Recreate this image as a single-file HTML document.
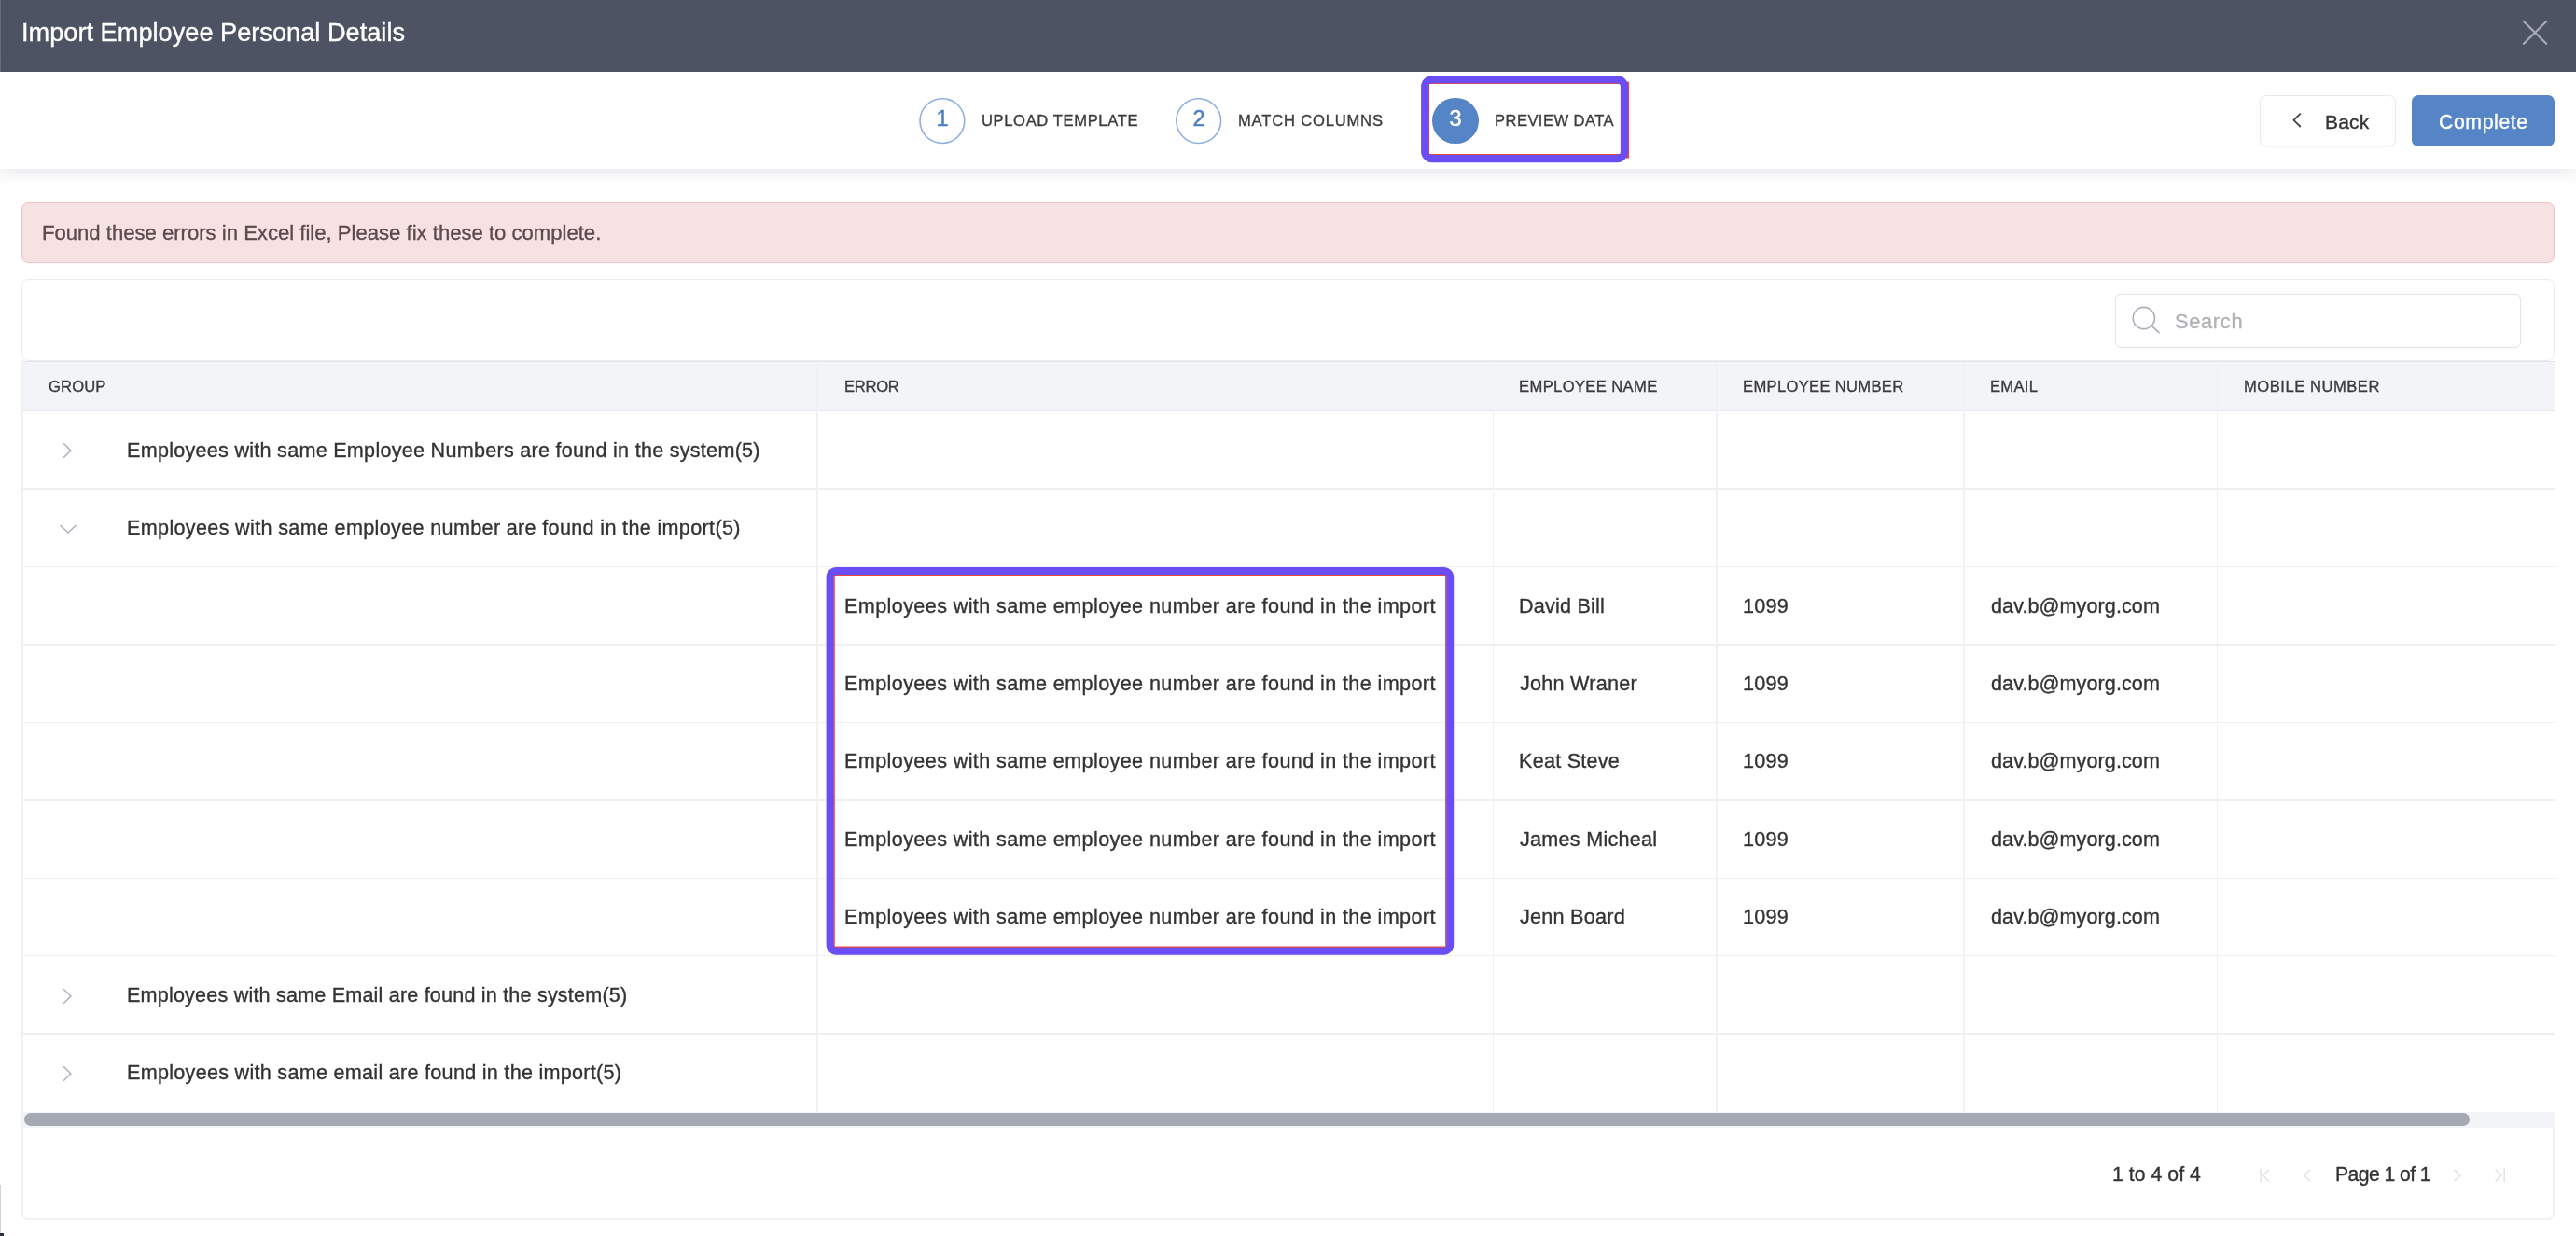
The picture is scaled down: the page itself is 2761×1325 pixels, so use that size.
<!DOCTYPE html>
<html>
<head>
<meta charset="utf-8">
<title>Import Employee Personal Details</title>
<style>
*{box-sizing:border-box;margin:0;padding:0}
html,body{width:2761px;height:1325px;overflow:hidden;background:#fff}
body{font-family:"Liberation Sans",sans-serif;color:#333;position:relative}
.abs{position:absolute}
.t{position:absolute;white-space:nowrap;line-height:40px;height:40px;-webkit-text-stroke:0.35px currentColor;will-change:transform}
#hdr{left:0;top:0;width:2761px;height:77px;background:#4d5363}
#steps{left:0;top:77px;width:2761px;height:104px;background:#fff;box-shadow:0 4px 14px rgba(60,70,90,.13)}
.circ{position:absolute;width:49.4px;height:49.4px;border-radius:50%;top:104.9px;background:#fff}
.circ.on{background:#5685c7;border-color:#5685c7}
.dg{position:absolute;white-space:nowrap;line-height:40px;height:40px;width:50px;text-align:center;font-size:23.6px;color:#4a7dc4;-webkit-text-stroke:0.45px currentColor;will-change:transform}
.btn{position:absolute;top:102px;height:55px;border-radius:7px}
#back{left:2422.3px;width:145.8px;border:1.5px solid #e8e9ec;background:#fff;box-shadow:0 1px 2px rgba(0,0,0,.04)}
#complete{left:2585px;width:153px;background:#5685c7}
#alert{left:23px;top:217.2px;width:2715.2px;height:64.5px;background:#f6e2e2;border:1px solid #efc4c7;border-radius:7px}
#card{left:23px;top:386px;width:2715.2px;height:921.6px;border:2px solid #f0f1f4;border-top:none;border-radius:0 0 7px 7px;background:#fff}
#toolbar{left:23px;top:299px;width:2715.2px;height:88px;border:1.5px solid #ebecef;border-radius:7px;background:#fff}
#search{left:2267.4px;top:314.6px;width:434.6px;height:58.1px;border:1.5px solid #dfe2e8;border-radius:6px;background:#fff}
#thead{left:23.7px;top:387.2px;width:2714.5px;height:53.5px;background:#f3f4f8;border-top:1.5px solid #e3e5ea;border-bottom:1.5px solid #e6e8ec}
.hl{position:absolute;left:23.7px;width:2714.5px;height:1.5px;background:#eeeff2}
.vl{position:absolute;top:388.5px;width:1.5px;height:803px;background:#f0f1f4}
#sbtrack{left:23.7px;top:1191.5px;width:2714.5px;height:17px;background:#f3f4f8}
#sbthumb{left:26.2px;top:1193.4px;width:2621px;height:13.8px;border-radius:7px;background:#a4a9b4}
.hbox{position:absolute;border:8.2px solid #6a4df4;border-radius:12px}
.rbox{position:absolute;border:1.6px solid #e8473c}
</style>
</head>
<body>
<div id="hdr" class="abs"></div>
<div class="abs" style="left:0;top:0;width:1.2px;height:77px;background:#666b79"></div>
<svg class="abs" style="left:2702px;top:20px" width="30" height="30" viewBox="0 0 30 30"><path d="M3 3L27.2 26.8M27.2 3L3 26.8" stroke="#a7abb7" stroke-width="2.3" stroke-linecap="round" fill="none"/></svg>

<div id="steps" class="abs"></div>
<svg class="abs" style="left:980px;top:100px" width="340" height="60" viewBox="980 100 340 60"><circle cx="1009.9" cy="129.6" r="23.9" fill="#fff" stroke="#8fb0de" stroke-width="1.6"/><circle cx="1284.7" cy="129.6" r="23.9" fill="#fff" stroke="#8fb0de" stroke-width="1.6"/></svg>
<div class="circ on" style="left:1535.2px"></div>
<div class="dg" id="d1" style="left:985px;top:107.2px">1</div>
<div class="dg" id="d2" style="left:1259.8px;top:107.2px">2</div>
<div class="dg" id="d3" style="left:1535px;top:107.2px;color:#fff">3</div>
<svg class="abs" style="left:0;top:0" width="2761" height="200" viewBox="0 0 2761 200"><rect x="1742.9" y="87.6" width="3.2" height="82" fill="#e8473c"/><rect x="1531.35" y="89.35" width="208.90" height="76.30" rx="0.75" fill="none" stroke="#e8473c" stroke-width="1.5"/><rect x="1527.20" y="85.10" width="213.80" height="85.00" rx="7.90" fill="none" stroke="#6a4df4" stroke-width="8.2"/></svg>

<div id="back" class="btn"></div>
<svg class="abs" style="left:2452px;top:117px" width="20" height="24" viewBox="0 0 20 24"><path d="M13.8 4.6L6.5 11.8L13.8 19" stroke="#444" stroke-width="1.8" fill="none"/></svg>
<div id="complete" class="btn"></div>

<div id="alert" class="abs"></div>

<div id="card" class="abs"></div>
<div id="toolbar" class="abs"></div>
<div id="search" class="abs"></div>
<svg class="abs" style="left:2280px;top:324px" width="40" height="40" viewBox="0 0 40 40"><circle cx="17.8" cy="17" r="11.6" stroke="#a9aeb9" stroke-width="1.6" fill="none"/><path d="M26 25.2L34.6 33.2" stroke="#a9aeb9" stroke-width="1.6" fill="none"/></svg>

<div class="abs" style="left:2735px;top:386px;width:5px;height:806px;background:#fff"></div>
<div id="thead" class="abs"></div>
<div class="hl" style="top:523.38px"></div>
<div class="hl" style="top:606.81px"></div>
<div class="hl" style="top:690.24px"></div>
<div class="hl" style="top:773.67px"></div>
<div class="hl" style="top:857.10px"></div>
<div class="hl" style="top:940.53px"></div>
<div class="hl" style="top:1023.96px"></div>
<div class="hl" style="top:1107.39px"></div>
<div class="vl" style="left:875.45px"></div>
<div class="vl" style="left:1599.55px"></div>
<div class="vl" style="left:1839.45px"></div>
<div class="vl" style="left:2104.25px"></div>
<div class="vl" style="left:2375.85px"></div>

<svg class="abs" style="left:62.3px;top:471.4px" width="20" height="24" viewBox="0 0 20 24"><path d="M6.05 4.300000000000001L13.95 12L6.05 19.7" stroke="#adb1bc" stroke-width="1.5" fill="none"/></svg>
<svg class="abs" style="left:61px;top:556.7px" width="24" height="20" viewBox="0 0 24 20"><path d="M3.5 6.0L12 14.0L20.5 6.0" stroke="#adb1bc" stroke-width="1.5" fill="none"/></svg>
<svg class="abs" style="left:62.3px;top:1055.625px" width="20" height="24" viewBox="0 0 20 24"><path d="M6.05 4.300000000000001L13.95 12L6.05 19.7" stroke="#adb1bc" stroke-width="1.5" fill="none"/></svg>
<svg class="abs" style="left:62.3px;top:1139.055px" width="20" height="24" viewBox="0 0 20 24"><path d="M6.05 4.300000000000001L13.95 12L6.05 19.7" stroke="#adb1bc" stroke-width="1.5" fill="none"/></svg>

<div class="t" id="title" style="left:23.20px;top:14.70px;font-size:27.2px;color:#fff;">Import Employee Personal Details</div>
<div class="t" id="s1" style="left:1052.20px;top:109.60px;font-size:16.6px;color:#3b3c3f;letter-spacing:0.61px;">UPLOAD TEMPLATE</div>
<div class="t" id="s2" style="left:1327.20px;top:109.60px;font-size:16.6px;color:#3b3c3f;letter-spacing:0.8px;">MATCH COLUMNS</div>
<div class="t" id="s3" style="left:1602.20px;top:109.60px;font-size:16.6px;color:#3b3c3f;letter-spacing:0.42px;">PREVIEW DATA</div>
<div class="t" id="tback" style="left:2491.60px;top:110.50px;font-size:21px;color:#333;letter-spacing:0.203px;">Back</div>
<div class="t" id="tcomplete" style="left:2614.30px;top:111.00px;font-size:21.3px;color:#fff;letter-spacing:0.567px;">Complete</div>
<div class="t" id="talert" style="left:45.20px;top:230.40px;font-size:22.1px;color:#5d4a4f;">Found these errors in Excel file, Please fix these to complete.</div>
<div class="t" id="tsearch" style="left:2331.20px;top:324.80px;font-size:21.8px;color:#b1b2b5;letter-spacing:0.687px;">Search</div>
<div class="t" id="h0" style="left:52.20px;top:394.70px;font-size:16.6px;color:#3b3c3f;letter-spacing:0.145px;">GROUP</div>
<div class="t" id="h1" style="left:904.60px;top:394.70px;font-size:16.6px;color:#3b3c3f;letter-spacing:-0.29px;">ERROR</div>
<div class="t" id="h2" style="left:1628.20px;top:394.70px;font-size:16.6px;color:#3b3c3f;letter-spacing:0.368px;">EMPLOYEE NAME</div>
<div class="t" id="h3" style="left:1868.40px;top:394.70px;font-size:16.6px;color:#3b3c3f;letter-spacing:0.308px;">EMPLOYEE NUMBER</div>
<div class="t" id="h4" style="left:2133.00px;top:394.70px;font-size:16.6px;color:#3b3c3f;letter-spacing:0.296px;">EMAIL</div>
<div class="t" id="h5" style="left:2405.20px;top:394.70px;font-size:16.6px;color:#3b3c3f;letter-spacing:0.517px;">MOBILE NUMBER</div>
<div class="t" id="g0" style="left:135.80px;top:462.66px;font-size:21.6px;color:#333;letter-spacing:0.259px;">Employees with same Employee Numbers are found in the system(5)</div>
<div class="t" id="g1" style="left:135.80px;top:546.10px;font-size:21.6px;color:#333;letter-spacing:0.33px;">Employees with same employee number are found in the import(5)</div>
<div class="t" id="e0" style="left:904.60px;top:629.52px;font-size:21.6px;color:#333;letter-spacing:0.388px;">Employees with same employee number are found in the import</div>
<div class="t" id="n0" style="left:1628.20px;top:629.52px;font-size:21.6px;color:#333;letter-spacing:0.208px;">David Bill</div>
<div class="t" id="u0" style="left:1868.40px;top:629.52px;font-size:21.6px;color:#333;letter-spacing:0.278px;">1099</div>
<div class="t" id="m0" style="left:2134.00px;top:629.52px;font-size:21.6px;color:#333;letter-spacing:0.068px;">dav.b@myorg.com</div>
<div class="t" id="e1" style="left:904.60px;top:712.95px;font-size:21.6px;color:#333;letter-spacing:0.388px;">Employees with same employee number are found in the import</div>
<div class="t" id="n1" style="left:1629.20px;top:712.95px;font-size:21.6px;color:#333;letter-spacing:0.259px;">John Wraner</div>
<div class="t" id="u1" style="left:1868.40px;top:712.95px;font-size:21.6px;color:#333;letter-spacing:0.278px;">1099</div>
<div class="t" id="m1" style="left:2134.00px;top:712.95px;font-size:21.6px;color:#333;letter-spacing:0.068px;">dav.b@myorg.com</div>
<div class="t" id="e2" style="left:904.60px;top:796.38px;font-size:21.6px;color:#333;letter-spacing:0.388px;">Employees with same employee number are found in the import</div>
<div class="t" id="n2" style="left:1628.20px;top:796.38px;font-size:21.6px;color:#333;letter-spacing:0.245px;">Keat Steve</div>
<div class="t" id="u2" style="left:1868.40px;top:796.38px;font-size:21.6px;color:#333;letter-spacing:0.278px;">1099</div>
<div class="t" id="m2" style="left:2134.00px;top:796.38px;font-size:21.6px;color:#333;letter-spacing:0.068px;">dav.b@myorg.com</div>
<div class="t" id="e3" style="left:904.60px;top:879.82px;font-size:21.6px;color:#333;letter-spacing:0.388px;">Employees with same employee number are found in the import</div>
<div class="t" id="n3" style="left:1629.20px;top:879.82px;font-size:21.6px;color:#333;letter-spacing:0.257px;">James Micheal</div>
<div class="t" id="u3" style="left:1868.40px;top:879.82px;font-size:21.6px;color:#333;letter-spacing:0.278px;">1099</div>
<div class="t" id="m3" style="left:2134.00px;top:879.82px;font-size:21.6px;color:#333;letter-spacing:0.068px;">dav.b@myorg.com</div>
<div class="t" id="e4" style="left:904.60px;top:963.25px;font-size:21.6px;color:#333;letter-spacing:0.388px;">Employees with same employee number are found in the import</div>
<div class="t" id="n4" style="left:1629.20px;top:963.25px;font-size:21.6px;color:#333;letter-spacing:0.256px;">Jenn Board</div>
<div class="t" id="u4" style="left:1868.40px;top:963.25px;font-size:21.6px;color:#333;letter-spacing:0.278px;">1099</div>
<div class="t" id="m4" style="left:2134.00px;top:963.25px;font-size:21.6px;color:#333;letter-spacing:0.068px;">dav.b@myorg.com</div>
<div class="t" id="g7" style="left:135.80px;top:1046.67px;font-size:21.6px;color:#333;letter-spacing:0.182px;">Employees with same Email are found in the system(5)</div>
<div class="t" id="g8" style="left:135.80px;top:1130.11px;font-size:21.6px;color:#333;letter-spacing:0.274px;">Employees with same email are found in the import(5)</div>
<div class="t" id="f1" style="left:2263.60px;top:1238.70px;font-size:21.2px;color:#333;letter-spacing:0.064px;">1 to 4 of 4</div>
<div class="t" id="f2" style="left:2502.60px;top:1238.70px;font-size:21.2px;color:#333;letter-spacing:-0.586px;">Page 1 of 1</div>

<svg class="abs" style="left:0;top:590px" width="2761" height="450" viewBox="0 590 2761 450"><rect x="894.00" y="616.30" width="655.90" height="399.00" rx="0.70" fill="none" stroke="#e8473c" stroke-width="1.6"/><rect x="889.60" y="611.90" width="664.60" height="407.90" rx="7.00" fill="none" stroke="#6a4df4" stroke-width="8"/></svg>

<div id="sbtrack" class="abs"></div>
<div id="sbthumb" class="abs"></div>

<svg class="abs" style="left:2420px;top:1250px" width="16" height="20" viewBox="0 0 16 20"><path d="M3.1 2.8V17.2M12 3.6L5.6 10L12 16.4" stroke="#dfe0e4" stroke-width="1.4" fill="none"/></svg>
<svg class="abs" style="left:2466px;top:1250px" width="14" height="20" viewBox="0 0 14 20"><path d="M9.8 4L3.9 10L9.8 16" stroke="#dfe0e4" stroke-width="1.4" fill="none"/></svg>
<svg class="abs" style="left:2627px;top:1250px" width="14" height="20" viewBox="0 0 14 20"><path d="M3.8 4L9.9 10L3.8 16" stroke="#dfe0e4" stroke-width="1.4" fill="none"/></svg>
<svg class="abs" style="left:2671px;top:1250px" width="16" height="20" viewBox="0 0 16 20"><path d="M13.2 2.8V17.2M3.6 3.6L10 10L3.6 16.4" stroke="#dfe0e4" stroke-width="1.4" fill="none"/></svg>

<div class="abs" style="left:0;top:1270px;width:1.2px;height:52px;background:#cfd2d7"></div>
<div class="abs" style="left:0;top:1322px;width:4px;height:3px;background:#2b2f38"></div>
</body>
</html>
